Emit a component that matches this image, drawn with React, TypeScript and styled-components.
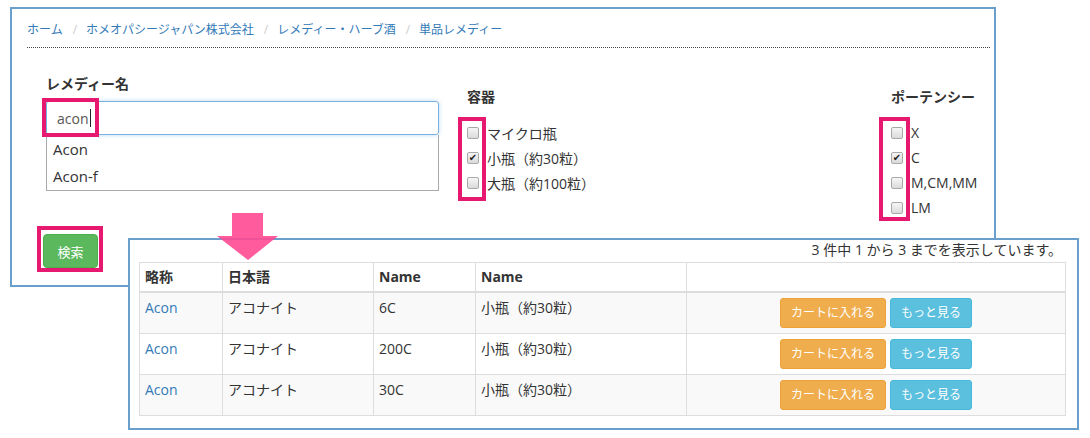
import React from "react";
import styled, { createGlobalStyle } from "styled-components";

const GlobalStyle = createGlobalStyle`
  body {
    margin: 0;
    background: #fff;
    font-family: "Open Sans", "Noto Sans CJK JP", sans-serif;
    color: #333;
  }
`;

const PINK = "#e6186f";
const FRAME = "#6a9ecb";

interface Row {
  abbr: string;
  ja: string;
  potency: string;
  size: string;
}

const rows: Row[] = [
  { abbr: "Acon", ja: "アコナイト", potency: "6C", size: "小瓶（約30粒）" },
  { abbr: "Acon", ja: "アコナイト", potency: "200C", size: "小瓶（約30粒）" },
  { abbr: "Acon", ja: "アコナイト", potency: "30C", size: "小瓶（約30粒）" },
];

const crumbs = ["ホーム", "ホメオパシージャパン株式会社", "レメディー・ハーブ酒", "単品レメディー"];

const containers = [
  { label: "マイクロ瓶", checked: false },
  { label: "小瓶（約30粒）", checked: true },
  { label: "大瓶（約100粒）", checked: false },
];

const potencies = [
  { label: "X", checked: false },
  { label: "C", checked: true },
  { label: "M,CM,MM", checked: false },
  { label: "LM", checked: false },
];

export default function App() {
  return (
    <Page>
      <GlobalStyle />
      <SearchPanel>
        <Breadcrumb>
          {crumbs.map((c) => (
            <Crumb key={c}>{c}</Crumb>
          ))}
        </Breadcrumb>
        <FormGrid>
          <Column>
            <FieldLabel>レメディー名</FieldLabel>
            <FakeInput>
              acon
              <Caret />
            </FakeInput>
            <Suggest>
              <SuggestItem>Acon</SuggestItem>
              <SuggestItem>Acon-f</SuggestItem>
            </Suggest>
          </Column>
          <Column $offset>
            <FieldLabel>容器</FieldLabel>
            <CheckList>
              {containers.map((c) => (
                <CheckRow key={c.label}>
                  <CheckBox $checked={c.checked} />
                  {c.label}
                </CheckRow>
              ))}
            </CheckList>
          </Column>
          <Column $offset>
            <FieldLabel>ポーテンシー</FieldLabel>
            <CheckList>
              {potencies.map((c) => (
                <CheckRow key={c.label}>
                  <CheckBox $checked={c.checked} />
                  {c.label}
                </CheckRow>
              ))}
            </CheckList>
          </Column>
        </FormGrid>
        <SearchButton>検索</SearchButton>
      </SearchPanel>

      <ResultPanel>
        <Info>3 件中 1 から 3 までを表示しています。</Info>
        <Table>
          <colgroup>
            <col style={{ width: 83 }} />
            <col style={{ width: 151 }} />
            <col style={{ width: 102 }} />
            <col style={{ width: 211 }} />
            <col />
          </colgroup>
          <thead>
            <tr>
              <Th>略称</Th>
              <Th>日本語</Th>
              <Th>Name</Th>
              <Th>Name</Th>
              <Th />
            </tr>
          </thead>
          <tbody>
            {rows.map((r, i) => (
              <Tr key={i} $striped={i % 2 === 0}>
                <Td>
                  <Link>{r.abbr}</Link>
                </Td>
                <Td>{r.ja}</Td>
                <Td>{r.potency}</Td>
                <Td>{r.size}</Td>
                <Td $center>
                  <Btn $variant="warning">カートに入れる</Btn>
                  <Btn $variant="info">もっと見る</Btn>
                </Td>
              </Tr>
            ))}
          </tbody>
        </Table>
      </ResultPanel>

      {/* annotation overlays */}
      <Mark style={{ left: 42, top: 98, width: 57, height: 39 }} />
      <Mark style={{ left: 458, top: 117, width: 28, height: 84 }} />
      <Mark style={{ left: 879, top: 117, width: 31, height: 104 }} />
      <Mark style={{ left: 37, top: 226, width: 66, height: 46 }} />
      <Arrow width="62" height="48" viewBox="0 0 62 48">
        <polygon points="15,0 46,0 46,23 61,23 31,47 0,23 15,23" fill="#ff4a93" />
      </Arrow>
    </Page>
  );
}

const Page = styled.div`
  position: relative;
  width: 1090px;
  height: 438px;
  overflow: hidden;
`;

const SearchPanel = styled.div`
  box-sizing: border-box;
  margin: 7px 0 0 10px;
  width: 986px;
  height: 280px;
  border: 2px solid ${FRAME};
  padding: 11px 4px 0 15px;
  background: #fff;
`;

const Breadcrumb = styled.div`
  display: flex;
  font-size: 12px;
  line-height: 20px;
  padding-bottom: 7px;
  border-bottom: 1px dotted #444;
`;

const Crumb = styled.span`
  color: #337ab7;

  & + &::before {
    content: "/";
    color: #ccc;
    padding: 0 9px 0 10px;
  }
`;

const FormGrid = styled.div`
  display: grid;
  grid-template-columns: 393px 396px 1fr;
  column-gap: 28px;
  margin: 26px 0 0 19px;
`;

const Column = styled.div<{ $offset?: boolean }>`
  display: flex;
  flex-direction: column;
  padding-top: ${({ $offset }) => ($offset ? "13px" : "0")};
`;

const FieldLabel = styled.div`
  font-size: 14px;
  font-weight: bold;
  line-height: 20px;
  color: #333;
`;

const FakeInput = styled.div`
  box-sizing: border-box;
  margin-top: 7px;
  height: 34px;
  border: 1px solid #79b0dd;
  border-radius: 3px;
  box-shadow: 0 0 4px rgba(102, 175, 233, 0.45);
  padding: 0 0 0 10px;
  display: flex;
  align-items: center;
  font-size: 14px;
  color: #555;
`;

const Caret = styled.span`
  display: inline-block;
  width: 1px;
  height: 18px;
  background: #222;
  margin-left: 1px;
`;

const Suggest = styled.div`
  box-sizing: border-box;
  height: 56px;
  border: 1px solid #aaa;
  border-top: none;
  padding: 1px 0 0 6px;
`;

const SuggestItem = styled.div`
  font-size: 15px;
  line-height: 27px;
  color: #333;
`;

const CheckList = styled.div`
  margin-top: 13px;
  display: flex;
  flex-direction: column;
`;

const CheckRow = styled.div`
  display: flex;
  align-items: center;
  height: 25px;
  font-size: 14px;
  color: #333;
`;

const CheckBox = styled.span<{ $checked: boolean }>`
  box-sizing: border-box;
  width: 12px;
  height: 12px;
  margin-right: 8px;
  border: 1px solid #a9a9a9;
  border-radius: 2px;
  background: linear-gradient(#f6f6f6, #dadada);
  display: flex;
  align-items: center;
  justify-content: center;
  font-size: 10px;
  line-height: 1;
  color: #222;

  &::after {
    content: "${({ $checked }) => ($checked ? "✔" : "")}";
    font-family: "DejaVu Sans", sans-serif;
  }
`;

const SearchButton = styled.button`
  margin: 14px 0 0 16px;
  width: 55px;
  height: 34px;
  border: 1px solid #4cae4c;
  border-radius: 4px;
  background: #5cb85c;
  color: #fff;
  font-family: "Noto Sans CJK JP", sans-serif;
  font-size: 13px;
  padding: 0;
`;

const ResultPanel = styled.div`
  position: relative;
  box-sizing: border-box;
  margin: -49px 0 0 128px;
  width: 951px;
  height: 192px;
  border: 2px solid ${FRAME};
  background: #fff;
  padding: 0 11px 0 9px;
`;

const Info = styled.div`
  text-align: right;
  font-size: 14px;
  line-height: 20px;
  padding-right: 4px;
  margin-bottom: 2px;
  color: #333;
`;

const Table = styled.table`
  width: 100%;
  border-collapse: collapse;
  table-layout: fixed;
  border: 1px solid #ddd;
  font-size: 14px;
`;

const Th = styled.th`
  text-align: left;
  font-weight: bold;
  padding: 4px 5px;
  line-height: 20px;
  border: 1px solid #ddd;
  border-bottom: 2px solid #ddd;
`;

const Tr = styled.tr<{ $striped: boolean }>`
  background: ${({ $striped }) => ($striped ? "#f9f9f9" : "#fff")};
`;

const Td = styled.td<{ $center?: boolean }>`
  padding: 5px;
  line-height: 20px;
  vertical-align: top;
  border: 1px solid #ddd;
  text-align: ${({ $center }) => ($center ? "center" : "left")};
`;

const Link = styled.span`
  color: #337ab7;
`;

const Btn = styled.span<{ $variant: "warning" | "info" }>`
  display: inline-block;
  padding: 5px 10px;
  font-size: 12px;
  line-height: 18px;
  border-radius: 3px;
  color: #fff;
  margin: 0 2px;
  background: ${({ $variant }) => ($variant === "warning" ? "#f0ad4e" : "#5bc0de")};
  border: 1px solid ${({ $variant }) => ($variant === "warning" ? "#eea236" : "#46b8da")};
`;

const Mark = styled.div`
  position: absolute;
  box-sizing: border-box;
  border: 4px solid ${PINK};
  pointer-events: none;
`;

const Arrow = styled.svg`
  position: absolute;
  left: 217px;
  top: 213px;
  opacity: 0.9;
`;
